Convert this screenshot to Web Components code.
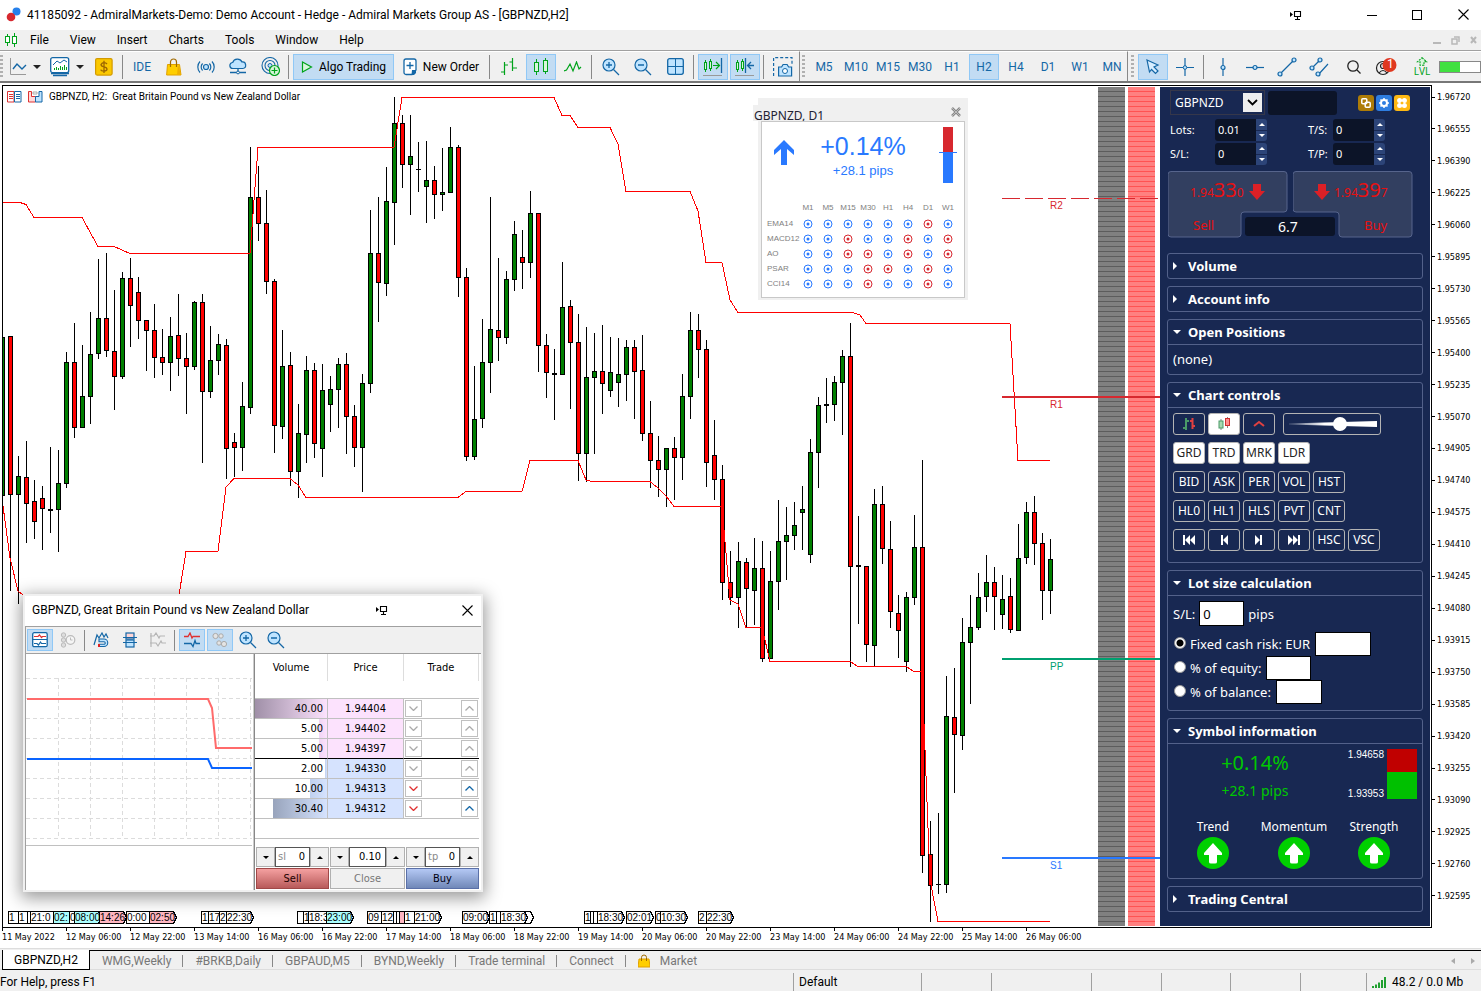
<!DOCTYPE html>
<html lang="en">
<head>
<meta charset="utf-8">
<title>41185092 - AdmiralMarkets-Demo: Demo Account</title>
<style>
html,body{margin:0;height:100%}
body{font:12px/16px Roboto,"Open Sans",sans-serif;color:#000;background:#fff}
</style>
</head>
<body>
<mt-terminal></mt-terminal>
<script>
const base='*{box-sizing:border-box}button,input,select{font:inherit;color:inherit;margin:0;padding:0;border:0;border-radius:0;background:none}a{color:inherit;text-decoration:none}svg{display:block;flex:none}';
function define(name,css,html){
  customElements.define(name,class extends HTMLElement{
    constructor(){
      super();
      this.attachShadow({mode:'open'}).innerHTML='<style>'+base+css+'</style>'+(typeof html==='string'?html:html(this));
    }
  });
}

/* ---------- icons ---------- */
const B='#1467a6',G='#00a31b',L='#bfe4ff';
const svg=(w,h,body,extra='')=>`<svg width="${w}" height="${h}" viewBox="0 0 ${w} ${h}" fill="none" aria-hidden="true" ${extra}>${body}</svg>`;
const ICONS={
  line:svg(18,18,`<path d="M1.500 0V16.500H17" stroke="#999"/><path d="M4 11l4-5 5 5 4-4" stroke="${B}" stroke-width="1.400"/>`),
  indi:svg(20,20,`<path d="M3 18.500h14M1 16.500h18" stroke="${B}" stroke-width="1.500"/><rect x=".7" y=".7" width="18" height="15" rx="2" fill="#fff" stroke="${B}" stroke-width="1.300"/><path d="M3 8l4-4 3 2 4-3 3 2" stroke="${B}"/><path d="M4.500 13v-2M6.500 13v-3M8.500 13v-2M10.500 13v-4M12.500 13v-3M14.500 13v-5M16.500 13v-3" stroke="${G}"/>`),
  dollar:svg(18,18,`<rect x=".6" y=".6" width="16.500" height="16.500" rx="1.500" fill="#fbc800" stroke="#d39a00" stroke-width="1.200"/><path d="M12 6Q11 4.700 9 4.700T6 6.600Q6 8.400 9 8.900T12 11.300Q12 13.100 9 13.100T5.800 11.700M9 2.800V15" stroke="#9c6700" stroke-width="1.300"/>`),
  bag:svg(16,18,`<path d="M1.500 6.500h12l1.500 10.500H.6z" fill="#ffce00" stroke="#e0a000"/><path d="M4.500 9V4a3 3 0 016 0v5" stroke="#a06a00" stroke-width="1.200"/><path d="M12 6l3 11h-4z" fill="#f0b000"/>`),
  signal:svg(18,14,`<circle cx="9" cy="7" r="2.500" fill="${L}" stroke="${B}" stroke-width="1.200"/><path d="M5.600 3.500a5 5 0 000 7M3 1.500a8 8 0 000 11M12.400 3.500a5 5 0 010 7M15 1.500a8 8 0 010 11" stroke="${B}" stroke-width="1.200"/>`),
  cloud:svg(18,17,`<path d="M4 10.500a3 3 0 01-.3-6A5 5 0 0113 4a3.200 3.200 0 01.8 6.500z" fill="${L}" stroke="${B}" stroke-width="1.200"/><path d="M9 10.500v4M1 14.500h16" stroke="${B}" stroke-width="1.300"/><circle cx="9" cy="14.500" r="1.400" fill="#fff" stroke="${B}"/>`),
  radar:svg(19,19,`<circle cx="9" cy="8.500" r="8" stroke="${B}" stroke-width="1.100"/><circle cx="9" cy="8.500" r="5" stroke="${B}" stroke-width="1.100"/><circle cx="9" cy="8.500" r="2" fill="${L}" stroke="${B}"/><circle cx="13.500" cy="13.500" r="5" fill="#d6f5d9" stroke="${G}" stroke-width="1.200"/><path d="M10.500 13.500h6M13.500 10.500v6" stroke="${G}" stroke-width="1.200"/>`),
  play:svg(12,12,`<path d="M1.500 1l9 5-9 5z" fill="#d9f6dd" stroke="${G}" stroke-width="1.200"/>`),
  order:svg(14,18,`<path d="M3 1h8a2 2 0 012 2v9l-4 4.500H3a2 2 0 01-2-2V3a2 2 0 012-2z" fill="#fff" stroke="${B}" stroke-width="1.300"/><path d="M13 12v3l-2 2H8.500L9 12z" fill="${B}"/><path d="M3.500 7.500h7M7 4v7" stroke="${B}" stroke-width="1.300"/>`),
  bars:svg(18,18,`<path d="M4.500 4v13M1 14h3.500M4.500 7H8M12.500 0v13M9.500 4h3M12.500 10H17" stroke="${G}" stroke-width="1.200"/>`),
  candles:svg(16,18,`<path d="M3.500 1v16M12.500 0v16" stroke="${G}"/><rect x="1.500" y="4.500" width="4" height="9" fill="#d9f6dd" stroke="${G}"/><rect x="10.500" y="2.500" width="4" height="11" fill="#d9f6dd" stroke="${G}"/>`),
  zig:svg(18,12,`<path d="M0 10l2.500-1L6 3l3 7 3.500-9L15 8l2-2" stroke="${G}" stroke-width="1.200"/>`),
  zin:svg(18,18,`<circle cx="7" cy="7" r="6" fill="${L}" stroke="${B}" stroke-width="1.200"/><path d="M11.500 11.500l5.500 5.500M4 7h6M7 4v6" stroke="${B}" stroke-width="1.300"/>`),
  zout:svg(18,18,`<circle cx="7" cy="7" r="6" fill="${L}" stroke="${B}" stroke-width="1.200"/><path d="M11.500 11.500l5.500 5.500M4 7h6" stroke="${B}" stroke-width="1.300"/>`),
  grid:svg(17,17,`<rect x=".7" y=".7" width="15.600" height="15.600" rx="2" fill="${L}" stroke="${B}" stroke-width="1.300"/><path d="M8.500 1v15M1 8.500h15" stroke="${B}"/>`),
  shiftR:svg(20,18,`<path d="M2.500 2v12M7.500 1v12" stroke="${G}"/><rect x="1.500" y="4.500" width="2" height="7" fill="#d9f6dd" stroke="${G}"/><rect x="6.500" y="3.500" width="2" height="7" fill="#d9f6dd" stroke="${G}"/><path d="M10 7.500h6M13 4l3.500 3.500L13 11" stroke="${G}" stroke-width="1.200"/><path d="M18.500 0v15" stroke="${B}" stroke-width="1.300"/><path d="M0 17.500h19" stroke="#999"/>`),
  shiftL:svg(20,18,`<path d="M2.500 2v12M7.500 1v12" stroke="${G}"/><rect x="1.500" y="4.500" width="2" height="7" fill="#d9f6dd" stroke="${G}"/><rect x="6.500" y="3.500" width="2" height="7" fill="#d9f6dd" stroke="${G}"/><path d="M10.500 0v15M19 7.500h-6M16 4l-3.500 3.500L16 11" stroke="${B}" stroke-width="1.300"/><path d="M0 17.500h19" stroke="#999"/>`),
  camera:svg(20,20,`<path d="M.6 19V.6H19V8" stroke="${B}" stroke-width="1.200" stroke-dasharray="3 2"/><path d="M5.600 10h3l1.500-2.500h4l1.500 2.500h3v9H5.600z" fill="${L}" stroke="${B}" stroke-width="1.200"/><circle cx="12" cy="14" r="2.500" fill="#fff" stroke="${B}"/>`),
  cursor:svg(14,16,`<path d="M1 1l11 5-4 2 4 4-2.500 2.500-4-4L3.500 13z" fill="#d8eeff" stroke="${B}" stroke-width="1.200"/>`),
  cross:svg(18,18,`<path d="M0 9.500h18M9 0v18" stroke="${B}" stroke-width="1.200"/><circle cx="9" cy="9.500" r="1.800" fill="${L}" stroke="${B}"/>`),
  vline:svg(8,18,`<path d="M4 0v18" stroke="${B}" stroke-width="1.200"/><circle cx="4" cy="9.500" r="2" fill="${L}" stroke="${B}" stroke-width="1.200"/>`),
  hline:svg(18,8,`<path d="M0 4.500h18" stroke="${B}" stroke-width="1.200"/><circle cx="9" cy="4.500" r="2" fill="${L}" stroke="${B}" stroke-width="1.200"/>`),
  trend:svg(20,20,`<path d="M3 17L17 3" stroke="${B}" stroke-width="1.200"/><circle cx="3" cy="17" r="2" fill="${L}" stroke="${B}" stroke-width="1.200"/><circle cx="17" cy="3" r="2" fill="${L}" stroke="${B}" stroke-width="1.200"/>`),
  channel:svg(20,20,`<path d="M3 11l8-8M9 18L19 7" stroke="${B}" stroke-width="1.200"/><circle cx="3" cy="11" r="2" fill="${L}" stroke="${B}" stroke-width="1.200"/><circle cx="11" cy="3" r="2" fill="${L}" stroke="${B}" stroke-width="1.200"/><circle cx="9" cy="17" r="2" fill="${L}" stroke="${B}" stroke-width="1.200"/>`),
  search:svg(14,14,`<circle cx="6" cy="6" r="5.200" stroke="#222" stroke-width="1.300"/><path d="M10 10l3.500 3.500" stroke="#222" stroke-width="1.300"/>`),
  person:svg(22,18,`<circle cx="8" cy="10" r="6.500" stroke="#222" stroke-width="1.200"/><circle cx="8" cy="8" r="2.500" stroke="#222" stroke-width="1.200"/><path d="M4 15q4-5 8 0" stroke="#222" stroke-width="1.200"/><circle cx="14.500" cy="7" r="7" fill="#e0381f"/>`),
  level:svg(12,9,`<path d="M6 .7l4.500 4H8v3.500H4V4.700H1.500z" fill="#d9f6dd" stroke="${G}" stroke-width="1.100" stroke-dasharray="2 1"/>`),
  pin:svg(12,10,`<path d="M0 2l3 2.500L0 7z" fill="#000"/><path d="M4.500 1.500h6v5h-6zM7.500 7v2M5 9.500h5" stroke="#000" stroke-width="1.100"/>`),
  d1:svg(16,16,`<rect x=".7" y=".7" width="14.500" height="14" rx="1.500" fill="#fff" stroke="${B}" stroke-width="1.300"/><path d="M2 4.500h4l1.500-1.500 2 2.500 1-1H14" stroke="#e03030" stroke-width="1.200"/><path d="M1 7.500h14" stroke="${B}"/><path d="M2 11.500h3l1.500 1.500 2-3 1 1.500H14" stroke="${B}" stroke-width="1.200"/>`),
  d2:svg(16,16,`<circle cx="3.500" cy="3" r="2.200" fill="#ddd" stroke="#bbb"/><circle cx="3.500" cy="8" r="2.200" fill="#ddd" stroke="#bbb"/><circle cx="3.500" cy="13" r="2.200" fill="#ddd" stroke="#bbb"/><circle cx="10.500" cy="8" r="4.300" fill="#f5f5f5" stroke="#bbb" stroke-width="1.200"/><path d="M10.500 5.500V8h2" stroke="#bbb"/>`),
  d3:svg(18,16,`<path d="M1 13L4 3l2 3 3-5 2 4 2-3 2 4" stroke="${B}" stroke-width="1.200"/><path d="M6 7h5a3.500 3.500 0 010 7.500H6v-2.300h5a1.200 1.200 0 000-2.500H6z" fill="${L}" stroke="${B}" stroke-width="1.100"/><path d="M6 12v3" stroke="#d22" stroke-width="2"/>`),
  d4:svg(14,16,`<rect x="3" y="1" width="8" height="6" fill="#ffd6d6" stroke="${B}" stroke-width="1.200"/><rect x="3" y="8" width="8" height="7" fill="${L}" stroke="${B}" stroke-width="1.200"/><path d="M0 5.500h14M0 10.500h14" stroke="${B}" stroke-width="1.200"/>`),
  d5:svg(16,16,`<path d="M0 4h4l2-3 3 5 1-2h5M0 11h6l2 3 3-5 1 2h4M1 1v14" stroke="#b5b5b5" stroke-width="1.200"/>`),
  d6:svg(16,16,`<path d="M0 4.500h4L6 1l2 5 1-1.500h7" stroke="#e03030" stroke-width="1.300"/><path d="M0 11.500h7l2 3 2-6 1 3h4" stroke="${B}" stroke-width="1.300"/>`),
  d7:svg(16,16,`<g fill="#e4e4e4" stroke="#aaa"><circle cx="3.500" cy="4" r="2.600"/><circle cx="9" cy="4" r="2.200"/><circle cx="7" cy="11" r="2.200"/><circle cx="12" cy="12" r="2.600"/></g>`),
  x:svg(11,11,`<path d="M.5.5l10 10M10.500.5l-10 10" stroke="#000" stroke-width="1.100"/>`),
};
const tri=(d,c='#000',w=6,h=3)=>svg(w,h,`<path d="${d==='up'?`M0 ${h}L${w/2} 0L${w} ${h}z`:`M0 0h${w}L${w/2} ${h}z`}" fill="${c}"/>`);

/* ---------- window chrome ---------- */
define('title-bar',`:host{display:flex;align-items:center;height:30px;padding:0 14px 1px 6px;background:#fff;gap:6px}
h1{font:inherit;margin:0;flex:1;white-space:nowrap}.b{display:flex;align-items:center}button{display:grid;place-items:center}`,
`${svg(15,15,'<circle cx="10.500" cy="4.500" r="4" fill="#2680eb"/><circle cx="5" cy="10" r="4.300" fill="#d7282f"/>')}
<h1><slot></slot></h1><div class="b">
<button aria-label="Detach" style="width:108px">${ICONS.pin}</button>
<button aria-label="Minimize" style="width:44px">${svg(10,10,'<path d="M0 5.500h10" stroke="#000"/>')}</button>
<button aria-label="Maximize" style="width:46px">${svg(10,10,'<rect x=".5" y=".5" width="9" height="9" stroke="#000"/>')}</button>
<button aria-label="Close" style="width:46px;margin-right:-19px">${ICONS.x}</button></div>`);

define('menu-bar',`:host{display:flex;align-items:center;height:20px;padding:0 3px 0 4px;background:#f0f0f0}
nav{display:flex;flex:1;margin-left:12px;gap:21px}.w{display:flex;gap:10px}`,
`${svg(14,14,`<path d="M3.500 1v12M10.500 0v14" stroke="${G}"/><rect x="1.500" y="3.500" width="4" height="6" fill="#fff" stroke="${G}"/><rect x="8.500" y="3.500" width="4" height="7" fill="#fff" stroke="${G}"/>`)}
<nav>${['File','View','Insert','Charts','Tools','Window','Help'].map(t=>`<a href="#${t}">${t}</a>`).join('')}</nav>
<div class="w">${svg(8,8,'<path d="M0 7h8" stroke="#b8b8b8" stroke-width="2"/>')}${svg(9,9,'<path d="M3 1h5v5M1 3h5v5H1z" stroke="#b8b8b8" stroke-width="1.500"/>')}${svg(8,8,'<path d="M1 1l5 6M6 1L1 7" stroke="#b8b8b8" stroke-width="2"/>')}</div>`);

define('tool-button',`:host{display:block}button{display:flex;align-items:center;justify-content:center;gap:6px;width:var(--w,30px);height:var(--h,26px);border:1px solid transparent;white-space:nowrap}
:host([pressed]) button{background:#c2dcf3;border-color:#90c8f6}:host([text]) button{color:#1467a6}`,
e=>`<button aria-label="${e.getAttribute('label')||''}">${ICONS[e.getAttribute('icon')]||''}<slot></slot>${e.hasAttribute('menu')?tri('down','#222',8,4):''}</button>`);

const tb=(icon,label,extra='')=>`<tool-button icon="${icon}" label="${label}" ${extra}></tool-button>`;
define('tool-bar',`:host{display:flex;height:33px;background:#f0f0f0;border-top:1px solid #a0a0a0;border-bottom:2px solid #777}
div{display:flex;align-items:center;gap:2px;border-top:1px solid #fff}
div:not(:last-child){border-right:1px solid #888}
i{width:4px;height:24px;background:linear-gradient(#888,#888) 1px 0/1px 100% no-repeat}
b{width:3px;height:24px;margin-right:2px;background:repeating-linear-gradient(#b0b0b0 0 2px,transparent 2px 4px)}
div:first-of-type{padding-right:1px}div+div{padding-left:2px}div.last{flex:1;position:relative;padding-left:3px}
.lv{font:10px/10px "Noto Sans",sans-serif;color:${G}}.lvl{display:grid;justify-items:center;width:30px;margin-left:4px}
.n{position:absolute;left:259px;top:5px;font-size:12px;color:#fff;line-height:14px}
meter{appearance:none;display:block;width:42px;height:12px;border:1px solid #888;background:linear-gradient(90deg,#40e040 50%,#fff 50%)}meter::-webkit-meter-inner-element,meter::-webkit-meter-bar{display:none}`,
`<div><b style="margin-right:0"></b>${tb('line','Line studies','menu style="--w:40px"')}${tb('indi','Indicators','menu style="--w:40px"')}${tb('dollar','Symbols')}<i></i>
<tool-button text label="IDE">IDE</tool-button>${tb('bag','Market')}${tb('signal','Signals')}${tb('cloud','VPS')}${tb('radar','Community')}<i></i>
<tool-button icon="play" label="Algo Trading" pressed style="--w:101px">Algo Trading</tool-button><tool-button icon="order" label="New Order" style="--w:90px">New Order</tool-button><i></i>
${tb('bars','Bars')}${tb('candles','Candlesticks','pressed')}${tb('zig','Line')}<i></i>${tb('zin','Zoom in')}${tb('zout','Zoom out')}${tb('grid','Tile')}<i></i>${tb('shiftR','Auto scroll','pressed')}${tb('shiftL','Chart shift','pressed')}<i></i>${tb('camera','Screenshot')}</div>
<div><b></b>${['M5','M10','M15','M30','H1','H2','H4','D1','W1','MN'].map(t=>`<tool-button text label="${t}" ${t==='H2'?'pressed':''}>${t}</tool-button>`).join('')}</div>
<div class="last"><b></b>${tb('cursor','Cursor','pressed')}${tb('cross','Crosshair')}<i></i>${tb('vline','Vertical line')}${tb('hline','Horizontal line')}${tb('trend','Trendline')}${tb('channel','Channel')}<span style="width:1px"></span>${tb('search','Search')}${tb('person','Account')}<span class="n">1</span><span class="lvl">${ICONS.level}<span class="lv">LVL</span></span><meter min="0" max="1" value=".5" aria-label="Level"></meter></div>`);

/* ---------- chart ---------- */
/* one row per 8px bar starting at x=10: direction, high, body top, body bottom, low */
const bars=`r252,252,411,507 g372,392,411,520 r357,393,420,459 r396,417,438,455 r402,414,425,466 g363,425,427,449 g366,399,426,468 g268,278,400,404 r239,278,344,354 g261,312,344,344
g228,270,313,340 g175,234,270,275 r169,234,267,273 r206,267,293,326 g188,194,293,295 r174,194,222,263 r193,208,237,255 r236,236,247,287 r220,246,274,294 r245,273,279,291
g233,252,279,307 r210,251,275,292 r249,274,283,330 g217,218,283,286 r210,218,308,379 g242,276,308,314 g250,260,277,291 r255,261,365,395 r349,358,364,393 g298,322,364,387
g63,113,324,330 r82,113,140,157 r106,139,198,210 r195,197,342,369 g246,282,343,355 r268,281,388,402 g320,349,388,414 g272,286,351,379 r279,286,360,374 g280,306,365,393
g292,305,321,348 g274,280,306,344 r269,280,333,370 r321,332,364,383 g290,299,364,408 g126,169,300,309 r113,169,199,238 g83,117,200,212 g13,39,119,161 r31,39,81,104
g31,72,81,131 g58,85,86,108 g57,96,103,139 r82,96,111,135 g64,108,111,127 g43,63,109,109 r61,63,194,213 r184,193,373,377 g282,335,373,376 g235,278,335,344
g113,245,279,309 r174,246,254,277 g187,195,254,260 g137,150,196,207 r146,173,179,205 g107,129,179,194 r129,129,262,288 r250,261,289,314 g265,289,291,336 g178,223,291,291
r216,222,259,325 r230,258,370,397 g243,293,370,398 g249,287,294,370 r241,287,300,330 g253,288,307,313 g254,290,299,323 g256,263,291,317 r256,263,288,335 r251,286,350,357
r317,349,377,404 r352,376,386,413 g364,364,386,423 r353,364,374,416 g290,312,374,396 g228,246,313,335 r230,246,266,294 r256,265,379,403 r336,371,396,416 r381,395,499,516
r467,498,514,521 g458,477,514,544 r474,478,505,543 g454,484,507,541 r457,484,575,578 g467,497,575,575 g416,457,498,526 g423,451,458,496 g418,441,452,466 g402,425,429,466
g355,368,471,479 g313,321,369,404 g294,320,322,339 g292,298,321,337 g266,272,299,351 r239,272,483,583 g432,481,483,540 r482,482,561,578 g405,420,562,582 r402,420,465,480
r437,465,528,544 r511,529,547,574 g508,513,578,588 g431,463,514,521 r376,463,772,789 r737,770,802,838 g729,800,801,810 g592,632,801,809 r584,633,651,709 g534,558,652,666
g511,543,559,620 g489,513,544,546 g471,498,513,528 r483,498,513,546 g491,515,531,545 r494,512,546,549 g440,474,547,547 g418,428,474,480 r412,428,460,481 r449,459,507,536
g455,475,507,530`.split(/\s+/).map((s,i)=>[10+i*8,s[0]==='g'?'#008000':'#f00',...s.slice(1).split(',').map(Number)]);
const candles=bars.map(([x,c,h,t,b,l])=>`<path d="M${x} ${h}h1v${l-h}h-1zM${x-2} ${t}h5v${b-t}h-5z" fill="#000"/>${b-t>2?`<path d="M${x-1} ${t+1}h3v${b-t-2}h-3z" fill="${c}"/>`:''}`).join('');
const tags=[[8,'1'],[18,'1'],[27,''],[30,'21:0'],[53,'02:','#aff'],[69,'0'],[74,'08:00','#aff'],[126,'0:00'],[99,'14:26','#ffb6c1'],[149,'02:50','#ffb6c1'],[201,'1'],[208,'17'],[219,'2'],[226,'22:30'],[297,''],[303,'1'],[308,'18:3'],[326,'23:00','#aff'],[367,'09'],[381,'12'],[393,''],[396,''],[399,'','#ffb6c1'],[404,'1'],[414,'21:00'],[462,'09:00'],[489,'1'],[496,''],[506,''],[500,'18:30'],[584,'1'],[590,''],[593,''],[597,'18:30'],[626,'02:01'],[655,'0'],[660,'10:30'],[698,'2'],[706,'22:30']]
.map(([x,t,c])=>`<path d="M${x}.5 827.500h24l3 6-3 6h-24z" fill="${c||'#fff'}" stroke="#000"/><text x="${x+1}" y="837">${t}</text>`).join('');
const levels=[['R2',114,'#d7282f',1,'18 5'],['R1',313,'#d7282f',2,''],['PP',575,'#00a070',2,''],['S1',774,'#2979ff',2,'']];
define('price-plot',`:host{display:block;min-width:0;contain:size;overflow:hidden}svg{width:100%;height:100%}text{font:10px "Liberation Sans",sans-serif}.ev text{fill:#000}`,
`<svg role="img" aria-label="GBPNZD H2 candlestick chart"><g transform="translate(-3 -2)"><g shape-rendering="crispEdges"><path d="M2 253h3v159h-3z" fill="#000"/><path d="M2 254h2v157h-2z" fill="#008000"/>${candles}
<g fill="none" stroke="#f00"><path d="M3 118.500H20L26 120.500 34 133.500H82L90 148 98 162.500H114L130 169.500H250L258 63.500H394L402 13.500H554L562 31.500H570L578 43.500H610L618 60 626 107.500H690L698 127 706 178.500H722L730 216 738 228.500H853L860 231 866 239.500H1010L1018 376.500H1050"/>
<path d="M3 422L10 474 18 507 23 511H179L186 467.500H218L226 403 234 394.500H290L298 401 306 413.500H458L466 407.500H522L530 376.500H578L586 396 592 397.500H650L658 404 666 412 674 422.500H722L730 516 738 520 746 543.500H762L770 577.500H850L858 582.500H906L914 587.500H922L930 796 938 837.500H1050"/></g></g>
${levels.map(([n,y,c,w,d])=>`<line x1="1002" x2="100%" y1="${y+(w&1)/2}" y2="${y+(w&1)/2}" stroke="${c}" stroke-width="${w}" stroke-dasharray="${d}"/><text x="1050" y="${y+11}" fill="${c}">${n}</text>`).join('')}
<g class="ev" shape-rendering="crispEdges">${tags}</g></g></svg>`);

const prices=Array.from({length:26},(_,i)=>(1.9672-i*.00165).toFixed(5));
const times=['11 May 2022','12 May 06:00','12 May 22:00','13 May 14:00','16 May 06:00','16 May 22:00','17 May 14:00','18 May 06:00','18 May 22:00','19 May 14:00','20 May 06:00','20 May 22:00','23 May 14:00','24 May 06:00','24 May 22:00','25 May 14:00','26 May 06:00'];
define('chart-view',`:host{display:grid;position:relative;grid-template:1fr 20px/minmax(0,1fr) 49px;padding:2px 0 0 2px;background:#fff;flex:1}
.plot{display:grid;border:1px solid #000;grid-template:100%/100%}
.plot>*{grid-area:1/1}
.bands{display:flex;gap:3px;margin:1px 276px 1px 0;justify-self:end}
.bands i{width:27px;background:repeating-linear-gradient(#808080 0 4px,#5c5c5c 4px 5px)}.bands i+i{background:repeating-linear-gradient(#ff8080 0 4px,#ff5252 4px 5px)}
.side{justify-self:end;margin:1px 1px 1px 0;display:flex}
.cap{display:flex;gap:6px;height:21px;align-items:center;padding-left:4px;align-self:start;font:10px Roboto,sans-serif;white-space:pre}
ol{list-style:none;margin:0;padding:0;font:9px/12px "DejaVu Sans Condensed","DejaVu Sans",sans-serif}
.p{display:flex;flex-direction:column;justify-content:space-between;padding:6px 0 26px}
.p li{display:flex;align-items:center;gap:2px}.p li::before{content:"";width:3px;height:1px;background:#000}
.t{display:flex;padding-left:0}.t li{flex:0 0 64px;white-space:nowrap}.t li::before{content:"";display:block;width:1px;height:3px;background:#000}`,
`<div class="plot"><div class="bands"><i></i><i></i></div><price-plot></price-plot>
<div class="cap">${svg(15,12,`<path d="M.5.5H7v10.500H.5z" fill="#fff" stroke="#d33"/><path d="M7.500.5H14v10.500H7.500z" fill="#fff" stroke="${B}"/><path d="M2 3.500h4M2 5.500h4M2 7.500h4" stroke="#d33"/><path d="M9 3.500h4M9 5.500h4M9 7.500h4" stroke="${B}"/>`)}${svg(15,12,`<path d="M.5.5h3v5h4V11h-7z" fill="#ffd9d9" stroke="#d33"/><path d="M14 .5h-3v5H7.500V11H14z" fill="${L}" stroke="${B}"/><path d="M5 1h4v2H5z" stroke="#aaa"/>`)}<span>GBPNZD, H2:  Great Britain Pound vs New Zealand Dollar</span></div>
<div class="side"><slot></slot></div></div>
<ol class="p">${prices.map(p=>`<li>${p}</li>`).join('')}</ol>
<ol class="t">${times.map(t=>`<li>${t}</li>`).join('')}</ol>
<slot name="float"></slot>`);

/* ---------- signal widget ---------- */
const reds={EMA14:[6],MACD12:[2,5,7],AO:[2,3,5,7],PSAR:[3,4,6],CCI14:[3,6]};
const dot=c=>svg(10,10,`<circle cx="5" cy="5" r="4" stroke="${c}"/><circle cx="5" cy="5" r="1.500" fill="${c}"/>`);
define('signal-widget',`:host{position:absolute;left:758px;top:15px;width:210px;background:#f0f0f0;padding:4px 3px 2px;font-family:"Liberation Sans",sans-serif}
header{display:flex;align-items:center;height:19px;margin-left:-11px;padding:0 4px 0 3px;font:12px "Noto Sans",sans-serif;color:#223}
header span{flex:1;background:linear-gradient(#f0f0f0,#f0f0f0) 0 0/8px 100% no-repeat;margin-top:3px;padding-left:1px;align-self:stretch;line-height:22px}
section{border:1px solid #c8c8c8;background:#fff;height:177px;padding:5px 7px 0 5px;position:relative}
.top{display:grid;grid-template-columns:36px 1fr 18px;height:72px;color:#2979ff;text-align:center}
.top>svg:first-child{margin:13px 0 0 7px}.top div{padding-right:16px}.big{font-size:25px;line-height:30px;padding-top:4px;display:block}.sm{font-size:13px;line-height:20px;display:block}
table{border-collapse:collapse;table-layout:fixed;width:191px;font-size:8px;line-height:10px;color:#808080}th{font-weight:400;padding:0;text-align:center;white-space:nowrap}td{padding:0}tbody th{text-align:left}tr{height:15px}thead tr{height:17px}td svg{margin:auto}col:first-child{width:31px}`,
`<header><span>GBPNZD, D1</span>${svg(10,10,'<path d="M1 1l8 8M9 1L1 9" stroke="#888" stroke-width="2.500"/><path d="M1 1l8 8M9 1L1 9" stroke="#ddd" stroke-width=".6"/>')}</header>
<section><div class="top">${svg(20,25,'<path d="M10 0l10 10v5l-7-6v16H7V9l-7 6v-5z" fill="#2979ff"/>')}<div><span class="big">+0.14%</span><span class="sm">+28.1 pips</span></div>${svg(18,56,'<path d="M4 0h10v25H4z" fill="#d7282f"/><path d="M4 25h10v31H4z" fill="#2979ff"/><path d="M0 25.500h18" stroke="#2979ff"/>')}</div>
<table><colgroup><col><col span="8"></colgroup><thead><tr><th></th>${['M1','M5','M15','M30','H1','H4','D1','W1'].map(t=>`<th scope="col">${t}</th>`).join('')}</tr></thead>
<tbody>${Object.entries(reds).map(([n,r])=>`<tr><th scope="row">${n}</th>${[0,1,2,3,4,5,6,7].map(i=>`<td>${dot(r.includes(i)?'#d7282f':'#2979ff')}</td>`).join('')}</tr>`).join('')}</tbody></table></section>`);

/* ---------- market depth window ---------- */
const depth=[['40.00','1.94404',72,'p'],['5.00','1.94402',8,'p'],['5.00','1.94397',8,'p'],['2.00','1.94330',2,'b'],['10.00','1.94313',17,'b',1],['30.40','1.94312',54,'b',1]];
const chev=(up,c)=>svg(9,5,`<path d="${up?'M.5 4.500l4-4 4 4':'M.5.5l4 4 4-4'}" stroke="${c}" stroke-width="1.300"/>`);
const spin=(id,pre,v)=>`<div class="spin"><button aria-label="Decrease ${id}">${tri('down')}</button><label>${pre}<input value="${v}" aria-label="${id}"></label><button aria-label="Increase ${id}">${tri('up')}</button></div>`;
let gridPath='';for(let i=0;i<7;i++)gridPath+=`M${32.5+i*32} 24V184`;for(let i=0;i<9;i++)gridPath+=`M0 ${24.5+i*20}H226`;
define('depth-window',`:host{position:absolute;left:23px;top:511px;width:460px;height:298px;background:#fff;border:2px solid #f0f0f0;box-shadow:0 4px 16px 2px rgba(0,0,0,.4);display:flex;flex-direction:column;font-size:11px}
header{display:flex;align-items:center;height:30px;padding:0 8px 2px 7px;font-size:12px;white-space:nowrap}header span{flex:1}header button{display:grid;place-items:center start}
.tools{--w:26px;--h:22px;display:flex;gap:2px;align-items:center;height:28px;padding-left:1px;background:#f0f0f0;border:1px solid #a0a0a0;border-width:1px 0 1px 1px}
.tools i{width:3px;height:21px;margin-right:1px;background:linear-gradient(#888,#888) 1px 0/1px 100% no-repeat}
main{display:grid;grid-template-columns:1fr 227px;flex:1;border-left:1px solid #a0a0a0}
.ticks{border-right:1px solid #ccc}.ticks svg{width:100%}
.book{border-left:1px solid #888;display:flex;flex-direction:column}
table{border-collapse:separate;border-spacing:0;table-layout:fixed;width:224px;font:11px/14px "DejaVu Sans Condensed","DejaVu Sans",sans-serif}
th{font-weight:400;padding:0;height:27px;border-right:1px solid #ddd}td{padding:0;height:20px;border-bottom:1px solid #c0c0c0}
td:first-child{text-align:right;padding-right:4px;border-right:1px solid #c0c0c0}td:nth-child(2){text-align:center;border-right:1px solid #c0c0c0}
.p td:nth-child(2){background:#fce2fd}.b td:nth-child(2){background:#d6e3fe}
.p td:first-child{background:linear-gradient(90deg,var(--a),#fce2fd) right/var(--v) 100% no-repeat}.b td:first-child{background:linear-gradient(90deg,var(--a),#d6e3fe) right/var(--v) 100% no-repeat}
.mid td{border-bottom-color:#000}.tr{display:flex;justify-content:space-between;padding:0 1px}.tr button{width:17px;height:17px;border:1px solid #c0c0c0;display:grid;place-items:center}
.gap td{height:18px}.sp td{height:20px}
.row{display:grid;grid-template-columns:73px 75px 73px;gap:1px;margin:1px 0 0 1px}
.spin{display:grid;grid-template-columns:19px 1fr 19px;height:20px}.spin button{background:#f0f0f0;border:1px solid #b0b0b0;display:grid;place-items:center}
.spin label{display:flex;align-items:center;border:1px solid #555;background:#fff;color:#888;padding:0 4px 0 2px}input{flex:1;width:10px;min-width:0;text-align:right;color:#000;font-family:"DejaVu Sans Condensed","DejaVu Sans",sans-serif}
.act button{height:21px;border:1px solid #b0b0b0;background:#f0f0f0;color:#777}.act .s{background:linear-gradient(#f4a0a0,#b85a5a);border-color:#a04848;color:#200}.act .y{background:linear-gradient(#b4c8f4,#7088b8);border-color:#5a70a8;color:#001}.act button,.spin label{font-family:"DejaVu Sans Condensed","DejaVu Sans",sans-serif}`,
`<header><span>GBPNZD, Great Britain Pound vs New Zealand Dollar</span><button aria-label="Detach" style="width:86px">${ICONS.pin}</button><button aria-label="Close">${ICONS.x}</button></header>
<div class="tools">${tb('d1','Ticks','pressed')}${tb('d2','Time and sales')}<i></i>${tb('d3','Magnet')}${tb('d4','Spread')}${tb('d5','Last')}<i></i>${tb('d6','Bid and ask','pressed')}${tb('d7','Deals','pressed')}${tb('zin','Zoom in')}${tb('zout','Zoom out')}</div>
<main><div class="ticks">${svg(226,193,`<path d="${gridPath}" stroke="#dcdcdc" stroke-dasharray="4 3"/><path d="M0 191.500h226" stroke="#c0c0c0"/><path d="M1 45H182L186 54 190 94H226" stroke="#ff6b6b" stroke-width="2"/><path d="M1 105H182L186 114H226" stroke="#0a64ff" stroke-width="2"/>`,'style="width:226px"')}</div>
<div class="book"><table><colgroup><col style="width:73px"><col style="width:76px"><col></colgroup><thead><tr><th scope="col">Volume</th><th scope="col">Price</th><th scope="col">Trade</th></tr></thead><tbody><tr class="gap"><td colspan="3" style="border-right:0"></td></tr>
${depth.map(([v,p,w,k,on],i)=>`<tr class="${k}${i===2?' mid':''}" style="--v:${w}px;--a:${k==='p'?(w>20?'#a090a8':'#f0d4f4'):(w>20?'#98a4bc':'#c0d0ee')}"><td>${v}</td><td>${p}</td><td><div class="tr"><button aria-label="Sell at ${p}">${chev(0,on?'#e03030':'#aaa')}</button><button aria-label="Buy at ${p}">${chev(1,on?B:'#aaa')}</button></div></td></tr>`).join('')}<tr class="sp"><td colspan="3" style="border-right:0"></td></tr></tbody></table>
<div style="flex:1"></div><div class="row">${spin('stop loss','sl','0')}${spin('volume','','0.10')}${spin('take profit','tp','0')}</div><div class="row act" style="margin-bottom:1px"><button class="s">Sell</button><button>Close</button><button class="y">Buy</button></div></div></main>`);

/* ---------- trading panel ---------- */
define('fold-section',`:host{display:block;border:1px solid #53618a;border-radius:3px}
h2{margin:0;font:700 13px/24px "Noto Sans","Open Sans",sans-serif;display:flex}h2 button{display:flex;align-items:center;gap:7px;width:100%;height:24px;padding-left:5px;white-space:nowrap}h2 svg{width:8px}
.body{display:none}:host([open]) .body{display:block;border-top:1px solid #53618a}`,
e=>`<h2><button aria-expanded="${e.hasAttribute('open')}">${e.hasAttribute('open')?tri('down','#fff',8,4):svg(8,8,'<path d="M0 0l4 4-4 4z" fill="#fff"/>')}<slot name="title"></slot></button></h2><div class="body"><slot></slot></div>`);

const num=(l,v,w)=>`<label style="grid-template-columns:${w}px 41px 11px">${l}<input value="${v}"><span class="st"><button aria-label="Increase ${l}" tabindex="-1">${tri('up','#fff',6,3)}</button><button aria-label="Decrease ${l}" tabindex="-1">${tri('down','#fff',6,3)}</button></span></label>`;
define('order-form',`:host{display:block;font-size:11px;height:156px}
.top{display:flex;align-items:center;padding-left:3px}
.sel{position:relative;width:95px;height:25px;border:1px solid #35374a;margin-right:3px}.sel select{appearance:none;width:100%;height:100%;padding-left:4px;font-size:12px}
.sel span{position:absolute;right:2px;top:2px;width:19px;height:19px;background:#eee;display:grid;place-items:center;pointer-events:none}
.blk{width:69px;height:24px;background:#0c1428;border-radius:3px;margin-right:21px}.ic{width:16px;height:16px;border-radius:3px;margin-right:2px;display:grid;place-items:center}
.g{display:grid;grid-template-columns:138px 1fr;gap:2px 0;margin:4px 0 6px 3px}
label{display:grid;align-items:center;height:22px}label input{height:22px;background:#0c1428;border-radius:3px 0 0 3px;padding:0 0 2px 3px;width:41px}
.st{display:grid;gap:1px;height:22px}.st button{background:#2c4478;display:grid;place-items:center}
.st button:first-child{border-radius:0 3px 0 0}.st button:last-child{border-radius:0 0 3px 0}
.deal{display:grid;grid-template-columns:120px 120px;gap:5px;position:relative;margin-left:1px}
.deal>button{height:67px;position:relative;color:#e81010;text-align:left}.deal button>svg:first-child{position:absolute;inset:0}
.q{position:relative;display:flex;height:38px;align-items:baseline;font-size:12px;line-height:38px;padding-left:22px}.q b{font-weight:400;font-size:20px}.q svg{align-self:center;margin:4px 4px 0 5px}.n{position:relative;display:block;padding:6px 0 0 25px;font-size:13px;height:29px;line-height:20px}
.buy .q{padding-left:16px}.buy .n{padding-left:71px}
output{position:absolute;left:77px;top:46px;width:90px;height:19px;background:#0c1428;border-radius:3px;text-align:center;font-size:14px;line-height:19px;padding-right:4px}`,
`<div class="top"><div class="sel"><select aria-label="Symbol"><option>GBPNZD</option></select><span>${svg(11,7,'<path d="M1 1l4.500 4.500L10 1" stroke="#000" stroke-width="1.800"/>')}</span></div><input class="blk" aria-label="Note">
<button class="ic" aria-label="Link" style="background:#ad7c08">${svg(10,10,'<rect x=".8" y=".8" width="5" height="5" rx="1" stroke="#fff" stroke-width="1.500"/><rect x="4.200" y="4.200" width="5" height="5" rx="1" stroke="#fff" stroke-width="1.500"/>')}</button>
<button class="ic" aria-label="Settings" style="background:#2e7de0">${svg(10,10,'<circle cx="5" cy="5" r="3" stroke="#fff" stroke-width="2"/><path d="M5 0v2M5 8v2M0 5h2M8 5h2M1.500 1.500l1 1M7.500 7.500l1 1M8.500 1.500l-1 1M2.500 7.500l-1 1" stroke="#fff" stroke-width="1.500"/>')}</button>
<button class="ic" aria-label="Tools" style="background:#fdb813">${svg(10,10,'<g fill="#fff"><circle cx="2.600" cy="2.600" r="2.500"/><circle cx="7.400" cy="2.600" r="2.500"/><circle cx="2.600" cy="7.400" r="2.500"/><circle cx="7.400" cy="7.400" r="2.500"/></g><path d="M5 3.500L6.500 5 5 6.500 3.500 5z" fill="#fdb813"/>')}</button></div>
<div class="g">${num('Lots:','0.01',45)}${num('T/S:','0',25)}${num('S/L:','0',45)}${num('T/P:','0',25)}</div>
<div class="deal"><button>${svg(120,67,'<path d="M3 .5H116a3 3 0 013 3V38a3 3 0 01-3 3H76a3 3 0 00-3 3V63a3 3 0 01-3 3H3a3 3 0 01-3-3V3.500a3 3 0 013-3z" fill="#323f60" stroke="#56648c"/>')}<span class="q">1.94<b>33</b>0${svg(16,16,'<path d="M4 0h8v7h4l-8 9L0 7h4z" fill="#dc2026"/>')}</span><span class="n">Sell</span></button>
<button class="buy">${svg(120,67,'<path d="M116 .5H3a3 3 0 00-3 3V38a3 3 0 003 3H43a3 3 0 013 3V63a3 3 0 003 3H116a3 3 0 003-3V3.500a3 3 0 00-3-3z" fill="#323f60" stroke="#56648c"/>')}<span class="q">${svg(16,16,'<path d="M4 0h8v7h4l-8 9L0 7h4z" fill="#dc2026"/>')}1.94<b>39</b>7</span><span class="n">Buy</span></button><output>6.7</output></div>`);

const cb=(t,c='')=>`<button class="${c}">${t}</button>`;
const nav=d=>svg(14,10,`<path d="${d}" fill="#fff"/>`);
define('chart-controls',`:host{display:grid;gap:7px;padding:5px 5px 11px;font-size:12px}div{display:flex;gap:3px}
button{width:32px;height:22px;border:1px solid #b4b4b4;border-radius:3px;display:grid;place-items:center;line-height:20px}.w{background:#fff;color:#222}
label{width:98px;height:22px;border:1px solid #b4b4b4;border-radius:3px;margin-left:5px;padding:0 3px;display:grid;align-items:center}label>*{grid-area:1/1}
input{appearance:none;width:90px;height:18px}
input::-webkit-slider-runnable-track{background:none}input::-webkit-slider-thumb{appearance:none;width:14px;height:14px;border-radius:50%;background:#fff}`,
`<div><button aria-label="Bars">${svg(14,14,'<path d="M4 1v12M1 11h3M4 4h3" stroke="#4a9a68" stroke-width="2"/><path d="M10.500 1v11M8 4h2M10 9h3" stroke="#e04040" stroke-width="2"/>')}</button><button class="w" aria-label="Candles">${svg(14,14,'<path d="M4 2v11M10.500 0v11" stroke="#888"/><rect x="2" y="4" width="4" height="7" fill="#a8d8b0" stroke="#4a9a68"/><rect x="8.500" y="1.500" width="4" height="7" fill="#ff9090" stroke="#d03030"/>')}</button><button aria-label="Line">${svg(14,8,'<path d="M2 6l5-4 5 4" stroke="#e04040" stroke-width="2"/>')}</button><label>${svg(90,8,'<defs><linearGradient id="f"><stop stop-color="#fff" stop-opacity=".2"/><stop offset=".4" stop-color="#fff"/></linearGradient></defs><path d="M2 3.500L90 1v6L2 4.500z" fill="url(#f)"/>')}<input type="range" min="0" max="100" value="60" aria-label="Scale"></label></div>
<div>${['GRD','TRD','MRK','LDR'].map(t=>cb(t,'w')).join('')}</div><div>${['BID','ASK','PER','VOL','HST'].map(t=>cb(t)).join('')}</div><div>${['HL0','HL1','HLS','PVT','CNT'].map(t=>cb(t)).join('')}</div>
<div>${[['First','M1 0h2v10H1zM8 0v10L3 5zM13 0v10L8 5z'],['Back','M4 0h2v10H4zM11 0v10L6 5z'],['Forward','M3 0v10L8 5zM8 0h2v10H8z'],['Last','M1 0v10L6 5zM6 0v10L11 5zM11 0h2v10h-2z']].map(([l,d])=>`<button aria-label="${l}">${nav(d)}</button>`).join('')}${cb('HSC')}${cb('VSC')}</div>`);

define('lot-size',`:host{display:grid;padding:5px 5px 6px;font-size:13px;line-height:18px;justify-items:start}
label,.r{display:flex;align-items:center;white-space:nowrap}input:not([type=radio]){height:24px;background:#fff;color:#000;border:1px solid #000;padding-left:3px}
.sl{margin-bottom:6px;gap:4px}.sl input:not([type=radio]){height:25px}
input[type=radio]{appearance:none;width:12px;height:12px;border-radius:50%;background:#fff;border:1px solid #999;margin:-2px 4px 0 1px}input:checked{background:radial-gradient(circle,#000 0 3px,#fff 4px)!important}`,
`<label class="sl">S/L:<input value="0" style="width:45px"><span>pips</span></label>
${[['Fixed cash risk: EUR',56,1],['% of equity:',45],['% of balance:',46]].map(([t,w,c])=>`<span class="r"><label><input type="radio" name="risk" ${c?'checked':''}>${t}</label><input aria-label="${t}" style="width:${w}px;margin-left:5px"></span>`).join('')}`);

define('symbol-info',`:host{display:block;height:129px}
.a{display:grid;grid-template-columns:174px 45px 30px;height:56px;margin-top:5px;text-align:center;color:#00c800}
.a b{display:block;font-weight:400;font-size:20px;line-height:28px}.a span{font-size:14px;line-height:28px}.r{display:flex;flex-direction:column;justify-content:space-between;height:50px;font:10px/11px "Liberation Sans",sans-serif;color:#fff;padding-right:3px;text-align:right}
.c{display:grid;grid-template-columns:90px 72px 88px;justify-items:center;margin-top:14px}.c div{display:grid;justify-items:center;gap:2px;font-size:12px;line-height:16px}`,
`<div class="a"><div><b>+0.14%</b><span>+28.1 pips</span></div><div class="r"><span style="font:inherit">1.94658</span><span style="font:inherit">1.93953</span></div>${svg(30,50,'<path d="M0 0h30v23H0z" fill="#c00000"/><path d="M0 23h30v27H0z" fill="#00c000"/>')}</div>
<div class="c">${['Trend','Momentum','Strength'].map(t=>`<div>${t}${svg(32,32,'<circle cx="16" cy="16" r="16" fill="#00d000"/><path d="M16 6l9 10v2h-5v7q0 1.500-2 1.500h-4q-2 0-2-1.500v-7H7v-2z" fill="#fff"/>')}</div>`).join('')}</div>`);

define('trade-panel',`:host{display:flex;flex-direction:column;gap:7px;width:270px;padding:3px 7px 14px;background:#182852;color:#fff;font-family:"Noto Sans","Open Sans",sans-serif}p{margin:0;font-size:13px;line-height:29px;padding-left:5px}`,
`<order-form></order-form>
<fold-section><span slot="title">Volume</span></fold-section>
<fold-section><span slot="title">Account info</span></fold-section>
<fold-section open><span slot="title">Open Positions</span><p>(none)</p></fold-section>
<fold-section open><span slot="title">Chart controls</span><chart-controls></chart-controls></fold-section>
<fold-section open><span slot="title">Lot size calculation</span><lot-size></lot-size></fold-section>
<fold-section open><span slot="title">Symbol information</span><symbol-info></symbol-info></fold-section>
<fold-section><span slot="title">Trading Central</span></fold-section>`);

/* ---------- bottom ---------- */
define('chart-tabs',`:host{display:flex;height:22px;background:#f0f0f0;border-top:1px solid #ddd;color:#777;padding-left:2px;box-shadow:inset 0 -1px #ddd}
nav{display:flex;flex:1;border-top:1px solid #000;margin-top:1px}a{display:flex;align-items:center;gap:10px;padding:0 12px;white-space:nowrap;position:relative}
a+a:not(:last-child)::after{content:"";position:absolute;right:0;top:4px;height:12px;width:1px;background:#888}
.on{background:#fff;color:#000;border:1px solid #000;border-top:0;margin-top:-1px;padding:0 11px}.ar{display:flex;gap:16px;align-items:center;padding-right:6px;border-top:1px solid #000;margin-top:1px}`,
`<nav>${['GBPNZD,H2','WMG,Weekly','#BRKB,Daily','GBPAUD,M5','BYND,Weekly','Trade terminal','Connect'].map((t,i)=>`<a href="#t${i}" class="${i?'':'on'}">${t}</a>`).join('')}<a href="#market">${svg(12,14,'<path d="M1 5h10l1 8H0z" fill="#ffce00" stroke="#e0a000"/><path d="M3.500 7V3.500a2.500 2.500 0 015 0V7" stroke="#a06a00"/>')}Market</a></nav>
<div class="ar">${svg(4,6,'<path d="M4 0v6L0 3z" fill="#aaa"/>')}${svg(4,6,'<path d="M0 0v6l4-3z" fill="#aaa"/>')}</div>`);
define('status-bar',`:host{display:grid;grid-template-columns:minmax(0,1fr) 128px 70px 100px 70px 69px 70px 66px 115px;height:21px;background:#f0f0f0;align-items:end;line-height:18px}
div{height:18px;border-left:1px solid #a0a0a0;padding-left:5px;white-space:nowrap}div:first-of-type{border:0;padding:0}.n{display:flex;align-items:center;gap:5px}`,
`<div>For Help, press F1</div><div>Default</div><div></div><div></div><div></div><div></div><div></div><div></div><div class="n">${svg(15,12,`<path d="M1 12v-2M4 12V8.500M7 12V6.500M10 12V4M13 12V1" stroke="#20a030" stroke-width="2"/>`)}48.2 / 0.0 Mb</div>`);

define('mt-terminal',`:host{display:flex;flex-direction:column;min-height:100vh}`,
`<title-bar>41185092 - AdmiralMarkets-Demo: Demo Account - Hedge - Admiral Markets Group AS - [GBPNZD,H2]</title-bar>
<menu-bar></menu-bar><tool-bar></tool-bar>
<chart-view><trade-panel></trade-panel><signal-widget slot="float"></signal-widget><depth-window slot="float"></depth-window></chart-view>
<chart-tabs></chart-tabs><status-bar></status-bar>`);
</script>
</body>
</html>
